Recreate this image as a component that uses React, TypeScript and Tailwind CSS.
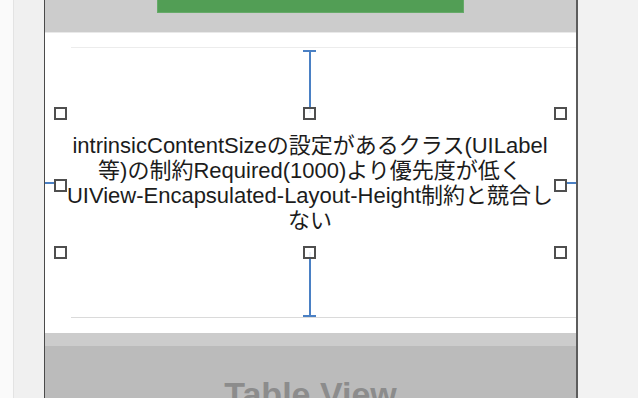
const Handle = ({ className }: { className: string }) => {
  return (
    <div
      className={`absolute h-[13px] w-[13px] border-2 border-[#4f4f4f] bg-white/90 ${className}`}
    />
  );
};

const labelLines = [
  "intrinsicContentSizeの設定があるクラス(UILabel",
  "等)の制約Required(1000)より優先度が低く",
  "UIView-Encapsulated-Layout-Height制約と競合し",
  "ない",
];

const App = () => {
  return (
    <div className="flex h-[398px] w-[638px] overflow-hidden bg-[#f2f2f2] font-['Liberation_Sans','Noto_Sans_CJK_JP',sans-serif]">
      <div className="w-[13px] shrink-0 bg-[#fafafa]" />
      <div className="w-px shrink-0 bg-[#e3e3e3]" />
      <div className="w-[30px] shrink-0 bg-[#f0f0f0]" />

      {/* device canvas */}
      <div className="flex w-[534px] shrink-0 flex-col overflow-hidden border-l border-r-2 border-l-[#4a4a4a] border-r-[#5c5c5c]">
        <div className="h-[32px] shrink-0 bg-[#cccccc]">
          <div className="ml-[112px] h-[13px] w-[307px] border-b border-l border-r border-[#66aa69] bg-[#529e55]" />
        </div>
        <div className="h-px shrink-0 bg-[#e9e9e9]" />

        {/* selected cell */}
        <div className="flex h-[300px] shrink-0 flex-col bg-white">
          <div className="ml-[26px] mt-[14px] h-px bg-[#ececec]" />

          {/* top constraint */}
          <div className="ml-[258px] mt-[2px] flex w-[13px] flex-col items-center">
            <div className="h-[2px] w-[13px] bg-[#4a80c4]" />
            <div className="h-[61px] w-[2px] bg-[#4a80c4]" />
          </div>

          <div className="flex items-center">
            <div className="h-[2px] w-[10px] bg-[#4a80c4]" />
            <div className="relative ml-[5px] flex h-[139px] w-[500px] flex-col items-center justify-center text-center text-[22px] leading-[25px] text-[#1c1c1c]">
              {labelLines.map((line) => (
                <span key={line} className="whitespace-nowrap">
                  {line}
                </span>
              ))}
              <Handle className="-left-[6px] -top-[6px]" />
              <Handle className="left-[243px] -top-[6px]" />
              <Handle className="-right-[7px] -top-[6px]" />
              <Handle className="-left-[6px] top-[66px]" />
              <Handle className="-right-[7px] top-[66px]" />
              <Handle className="-bottom-[7px] -left-[6px]" />
              <Handle className="-bottom-[7px] left-[243px]" />
              <Handle className="-bottom-[7px] -right-[7px]" />
            </div>
            <div className="ml-[6px] h-[2px] w-[10px] bg-[#4a80c4]" />
          </div>

          {/* bottom constraint */}
          <div className="ml-[258px] flex w-[13px] flex-col items-center">
            <div className="h-[63px] w-[2px] bg-[#4a80c4]" />
            <div className="h-[2px] w-[13px] bg-[#4a80c4]" />
          </div>

          <div className="ml-[26px] h-px bg-[#dadada]" />
        </div>

        <div className="h-[13px] shrink-0 bg-[#cccccc]" />
        <div className="flex-1 bg-[#bbbbbb] pt-[31px] text-center text-[34px] font-bold leading-[34px] text-[#8c8c8c]">
          Table View
        </div>
      </div>

      <div className="flex-1 bg-[#f2f2f2]" />
    </div>
  );
};

export default App;
